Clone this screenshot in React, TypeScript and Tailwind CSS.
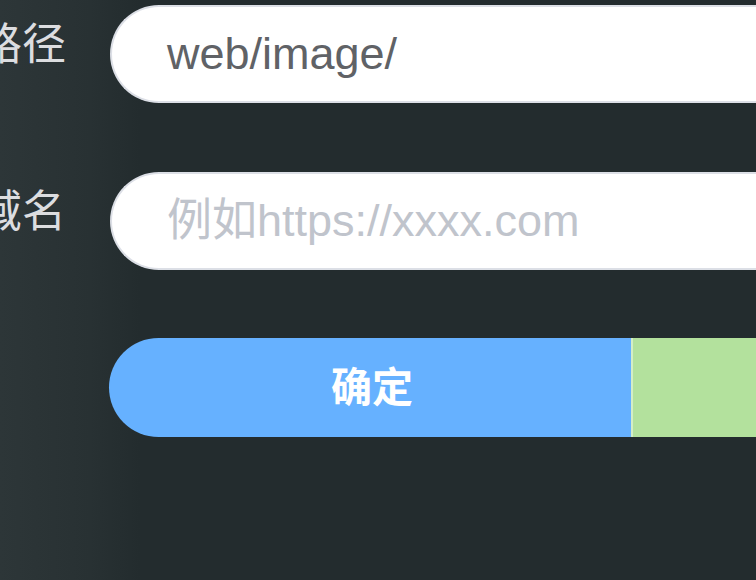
import React from "react";

const cjk = { fontFamily: '"Noto Sans CJK SC", "Noto Sans", sans-serif' };
const mixed = { fontFamily: '"Liberation Sans", "Noto Sans CJK SC", Arial, sans-serif' };

function Row({ label, children }: { label: string; children: React.ReactNode }) {
  return (
    <div className="flex items-start">
      <div className="w-[110px] shrink-0 flex justify-end pr-[44px] pt-[14px]">
        <span className="whitespace-nowrap text-[44px] leading-none text-[#dcdde0]" style={cjk}>
          {label}
        </span>
      </div>
      {children}
    </div>
  );
}

export default function App() {
  return (
    <div className="w-[756px] h-[580px] overflow-hidden bg-[#232c2e] bg-[linear-gradient(to_right,#2d3638_0px,#283133_90px,#232c2e_140px)]">
      <div className="flex flex-col pt-[5px]">
        <Row label="路径">
          <div
            className="w-[760px] shrink-0 h-[98px] rounded-l-full border-2 border-r-0 border-[#dcdfe6] bg-white flex items-center pl-[55px] text-[45px] text-[#606266]"
            style={mixed}
          >
            web/image/
          </div>
        </Row>
        <div className="h-[69px]" />
        <Row label="域名">
          <div
            className="w-[760px] shrink-0 h-[98px] rounded-l-full border-2 border-r-0 border-[#dcdfe6] bg-white flex items-center pl-[55px] text-[45px] text-[#c0c4cc]"
            style={mixed}
          >
            例如https://xxxx.com
          </div>
        </Row>
        <div className="h-[68px]" />
        <div className="flex pl-[109px]">
          <div
            className="w-[522px] shrink-0 h-[99px] rounded-l-full bg-[#66b1ff] flex items-center justify-center pb-[6px] pl-[4px] text-white font-bold text-[41px]"
            style={cjk}
          >
            确定
          </div>
          <div className="w-[400px] shrink-0 h-[99px] bg-[#b3e19d] border-l-2 border-[#d4edc6]" />
        </div>
      </div>
    </div>
  );
}
